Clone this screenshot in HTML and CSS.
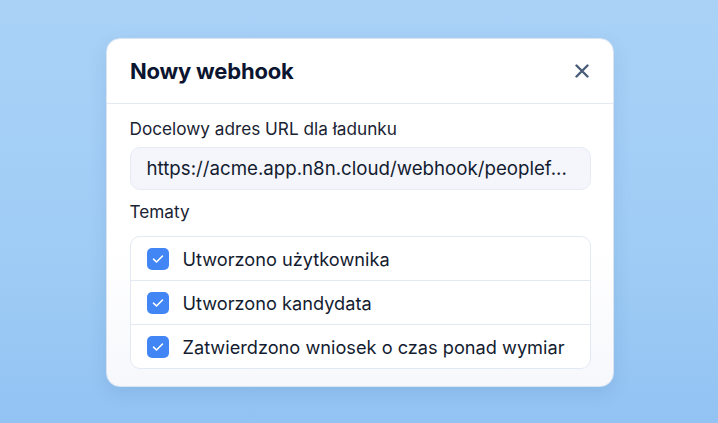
FILE: index.html
```html
<!DOCTYPE html>
<html lang="pl">
<head>
<meta charset="utf-8">
<title>Nowy webhook</title>
<link rel="stylesheet" href="styles.css">
</head>
<body>
<div class="stage">
  <div class="modal">
    <div class="modal-header">
      <h2 class="modal-title">Nowy webhook</h2>
      <button class="close-btn" aria-label="Zamknij">
        <svg width="14" height="14" viewBox="0 0 14 14"><path d="M1.5 1.5L12.5 12.5M12.5 1.5L1.5 12.5" stroke="#4a5d78" stroke-width="2.4" stroke-linecap="round"/></svg>
      </button>
    </div>
    <div class="modal-body">
      <label class="field-label">Docelowy adres URL dla ładunku</label>
      <div class="input">https://acme.app.n8n.cloud/webhook/peoplef...</div>
      <div class="field-label topics-label">Tematy</div>
      <ul class="topic-list">
        <li class="topic"><span class="check"><svg width="12" height="10" viewBox="0 0 12 10"><path d="M1.5 5.2L4.5 8L10.5 2" fill="none" stroke="#fff" stroke-width="1.6" stroke-linecap="round" stroke-linejoin="round"/></svg></span>Utworzono użytkownika</li>
        <li class="topic"><span class="check"><svg width="12" height="10" viewBox="0 0 12 10"><path d="M1.5 5.2L4.5 8L10.5 2" fill="none" stroke="#fff" stroke-width="1.6" stroke-linecap="round" stroke-linejoin="round"/></svg></span>Utworzono kandydata</li>
        <li class="topic"><span class="check"><svg width="12" height="10" viewBox="0 0 12 10"><path d="M1.5 5.2L4.5 8L10.5 2" fill="none" stroke="#fff" stroke-width="1.6" stroke-linecap="round" stroke-linejoin="round"/></svg></span>Zatwierdzono wniosek o czas ponad wymiar</li>
      </ul>
    </div>
  </div>
</div>
</body>
</html>
```
FILE: styles.css
```css
* { box-sizing: border-box; }
html, body { margin: 0; padding: 0; }
body {
  width: 718px;
  height: 423px;
  overflow: hidden;
  background: linear-gradient(180deg, #aad2f7 0%, #9fccf5 60%, #92c3f3 100%);
  font-family: Inter, "Noto Sans", sans-serif;
  color: #0f1a33;
}
.stage {
  padding-top: 38px;
  padding-left: 2px;
  display: flex;
  justify-content: center;
}
.modal {
  width: 508px;
  background: linear-gradient(180deg, #ffffff 0%, #ffffff 60%, #f7f8fc 100%);
  border: 1.5px solid #dbe5f2;
  border-radius: 14px;
  box-shadow: 0 6px 18px rgba(40, 80, 140, 0.12);
}
.modal-header {
  height: 65px;
  display: flex;
  align-items: center;
  justify-content: space-between;
  padding: 0 23px;
  border-bottom: 1px solid #e3e9f3;
}
.modal-title {
  margin: 0;
  font-size: 22px;
  font-weight: 700;
  color: #0b1530;
  letter-spacing: -0.2px;
}
.close-btn {
  border: 0;
  background: none;
  padding: 0;
  width: 20px;
  height: 20px;
  display: flex;
  align-items: center;
  justify-content: center;
  margin-right: -2px;
}
.modal-body {
  padding: 15px 22.5px 17px 22.5px;
}
.field-label {
  display: block;
  font-size: 17.2px;
  line-height: 20px;
  color: #1a2333;
}
.input {
  margin-top: 8px;
  height: 43px;
  border: 1.5px solid #e6ebf4;
  background: #f4f6fc;
  border-radius: 10px;
  padding: 0 16px;
  display: flex;
  align-items: center;
  font-size: 18.7px;
  color: #141c30;
  white-space: nowrap;
}
.topics-label {
  margin-top: 12px;
}
.topic-list {
  list-style: none;
  margin: 14px 0 0 0;
  padding: 0;
  border: 1px solid #e3e9f3;
  border-radius: 10px;
  background: #fff;
}
.topic {
  height: 43px;
  display: flex;
  align-items: center;
  padding: 0 16px;
  font-size: 18.2px;
  color: #141c30;
}
.topic + .topic {
  border-top: 1px solid #e3e9f3;
  height: 44px;
}
.check {
  width: 22px;
  height: 22px;
  border-radius: 5px;
  background: #4286f5;
  display: flex;
  align-items: center;
  justify-content: center;
  margin-right: 14px;
  flex: none;
}
```
